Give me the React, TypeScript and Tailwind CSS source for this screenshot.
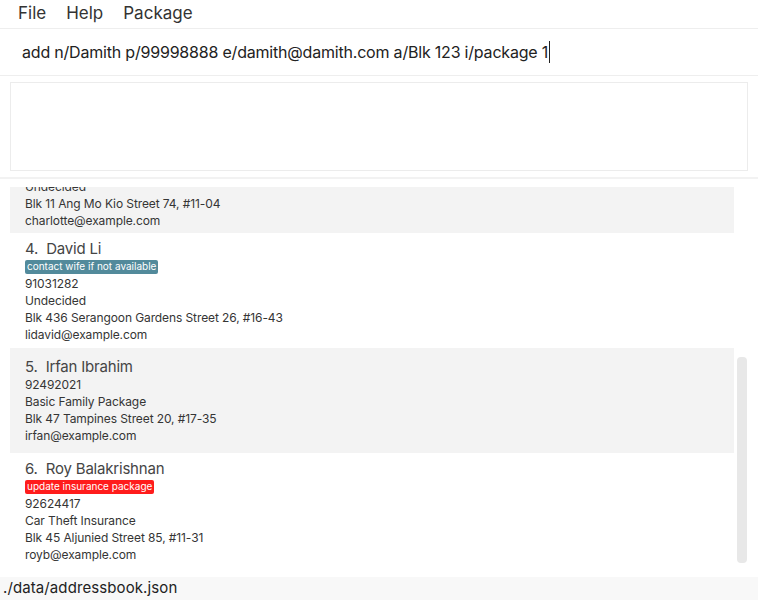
import React from 'react';

interface Person {
  index: number;
  name: string;
  tag?: { label: string; color: string };
  phone: string;
  plan: string;
  address: string;
  email: string;
}

const people: Person[] = [
  {
    index: 3,
    name: 'Charlotte Oliveiro',
    phone: '93210283',
    plan: 'Undecided',
    address: 'Blk 11 Ang Mo Kio Street 74, #11-04',
    email: 'charlotte@example.com',
  },
  {
    index: 4,
    name: 'David Li',
    tag: { label: 'contact wife if not available', color: 'bg-[#528a9b]' },
    phone: '91031282',
    plan: 'Undecided',
    address: 'Blk 436 Serangoon Gardens Street 26, #16-43',
    email: 'lidavid@example.com',
  },
  {
    index: 5,
    name: 'Irfan Ibrahim',
    phone: '92492021',
    plan: 'Basic Family Package',
    address: 'Blk 47 Tampines Street 20, #17-35',
    email: 'irfan@example.com',
  },
  {
    index: 6,
    name: 'Roy Balakrishnan',
    tag: { label: 'update insurance package', color: 'bg-[#ff1c1c]' },
    phone: '92624417',
    plan: 'Car Theft Insurance',
    address: 'Blk 45 Aljunied Street 85, #11-31',
    email: 'royb@example.com',
  },
];

function PersonCard({ person, shaded, first }: { person: Person; shaded: boolean; first: boolean }) {
  // cards with a tag sit a little tighter, like the original cell layout
  let pad = person.tag ? 'pt-[7px] pb-[5px]' : 'pt-[10px] pb-[9px]';
  if (first) pad = 'pt-[10px] pb-[4px]';
  return (
    <div className={`pl-[15px] ${pad} ${shaded ? 'bg-[#f3f3f3]' : 'bg-white'}`}>
      <div className="text-[15px] leading-[18px] tracking-[-0.2px] text-[#454545]">
        {person.index}.&nbsp; {person.name}
      </div>
      {person.tag && (
        <div className="flex h-[17px] items-center">
          <span
            className={`${person.tag.color} flex h-[14px] items-center rounded-[2px] px-[2px] text-[10px] text-white`}
          >
            {person.tag.label}
          </span>
        </div>
      )}
      <div className="text-[12px] leading-[17px] tracking-[-0.1px] text-[#353535]">
        <div>{person.phone}</div>
        <div>{person.plan}</div>
        <div>{person.address}</div>
        <div>{person.email}</div>
      </div>
    </div>
  );
}

export default function App() {
  return (
    <div
      className="flex h-[600px] w-[758px] flex-col overflow-hidden bg-white"
      style={{ fontFamily: 'Inter, "Noto Sans", sans-serif' }}
    >
      {/* menu bar */}
      <div className="flex h-[28px] items-center gap-[20px] pl-[18px] text-[17px] text-[#333]">
        <span>File</span>
        <span>Help</span>
        <span>Package</span>
      </div>

      {/* command box */}
      <div className="flex h-[48px] items-center border-y border-[#eeeeee] pl-[22px] text-[16px] tracking-[-0.2px] text-[#222]">
        <span>add n/Damith p/99998888 e/damith@damith.com a/Blk 123 i/package 1</span>
        <span className="ml-[1px] h-[22px] w-[1px] bg-[#222]" />
      </div>

      {/* result display */}
      <div className="border-b-2 border-[#f2f2f2] px-[10px] pt-[6px] pb-[6px]">
        <div className="h-[89px] border border-[#ececec]" />
      </div>

      {/* person list, scrolled part way down */}
      <div className="relative flex-1 overflow-hidden pt-[8px] pr-[24px] pl-[10px]">
        <div className="h-full overflow-hidden">
          <div className="-mt-[54px]">
            {people.map((p, i) => (
              <PersonCard key={p.index} person={p} shaded={i % 2 === 0} first={i === 0} />
            ))}
          </div>
        </div>
        <div className="absolute top-[178px] right-[11px] h-[206px] w-[10px] rounded-[4px] bg-[#e8e8e8]" />
      </div>

      {/* status bar */}
      <div className="flex h-[23px] items-center bg-[#f8f8f8] pl-[3px] text-[15px] tracking-[0.1px] text-[#222]">
        ./data/addressbook.json
      </div>
    </div>
  );
}
